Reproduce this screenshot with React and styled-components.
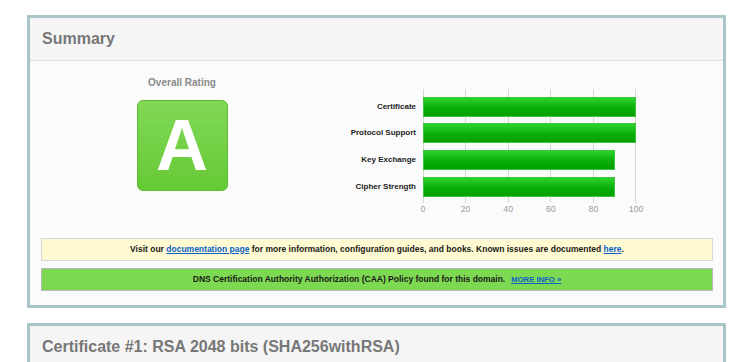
import React from 'react';
import styled, { createGlobalStyle } from 'styled-components';

const GlobalStyle = createGlobalStyle`
  body {
    margin: 0;
    background: #fff;
    font-family: "Liberation Sans", Arial, Helvetica, sans-serif;
  }
`;

const Page = styled.div`
  padding: 15px 24px 0 27px;
  height: 362px;
  overflow: hidden;
  box-sizing: border-box;
`;

const Section = styled.div`
  border: 3px solid #a9c5c7;
  background: #fbfbfb;
  margin-bottom: 15px;
`;

const SectionHeader = styled.div`
  background: #f5f5f5;
  border-bottom: 1px solid #d6e0e0;
  padding: 12px 12px;
  font-size: 16px;
  line-height: 18px;
  font-weight: bold;
  color: #777;
`;

const SectionBody = styled.div`
  padding: 0 10px 14px 11px;
  min-height: ${(props) => props.minHeight || 0}px;
`;

const SummaryRow = styled.div`
  display: flex;
  align-items: flex-start;
`;

const RatingCol = styled.div`
  width: 282px;
  display: flex;
  flex-direction: column;
  align-items: center;
  padding-top: 16px;
`;

const RatingTitle = styled.div`
  font-size: 10px;
  line-height: 12px;
  font-weight: bold;
  color: #8a8a8a;
  margin-bottom: 11px;
`;

const Grade = styled.div`
  width: 91px;
  height: 91px;
  box-sizing: border-box;
  border: 1px solid #5dbb33;
  border-radius: 6px;
  background: linear-gradient(#80d856, #67c936);
  color: #fff;
  font-size: 72px;
  line-height: 89px;
  font-weight: bold;
  text-align: center;
`;

const Chart = styled.div`
  margin-top: 28px;
  display: grid;
  grid-template-columns: 100px 213px;
`;

const Labels = styled.div`
  display: flex;
  flex-direction: column;
  gap: 6.7px;
  padding: 7.7px 7px 6px 0;
`;

const Label = styled.div`
  height: 20px;
  line-height: 20px;
  font-size: 8px;
  font-weight: bold;
  color: #222;
  text-align: right;
  white-space: nowrap;
`;

const Plot = styled.div`
  display: flex;
  flex-direction: column;
  gap: 6.7px;
  padding: 7.7px 0 6px 0;
  background-image: linear-gradient(#d6d6d6, #d6d6d6), linear-gradient(#d6d6d6, #d6d6d6),
    linear-gradient(#d6d6d6, #d6d6d6), linear-gradient(#d6d6d6, #d6d6d6),
    linear-gradient(#d6d6d6, #d6d6d6), linear-gradient(#d6d6d6, #d6d6d6);
  background-size: 1px 100%;
  background-repeat: no-repeat;
  background-position: 0 0, 20% 0, 40% 0, 60% 0, 80% 0, 100% 0;
`;

const Bar = styled.div`
  height: 20px;
  box-sizing: border-box;
  border: 1px solid #3cc43c;
  background: linear-gradient(#2dd22d, #0aae0a 55%, #02a002);
`;

const Axis = styled.div`
  grid-column: 2;
  display: flex;
  justify-content: space-between;
  width: 213px;
  margin-top: 1px;
`;

const Tick = styled.span`
  width: 0;
  display: flex;
  justify-content: center;
  font-size: 8.7px;
  line-height: 10px;
  color: #9a9a9a;
`;

const Notice = styled.div`
  margin-top: ${(props) => props.gap}px;
  border: 1px solid ${(props) => (props.kind === 'ok' ? '#b8b8b8' : '#d8d8d8')};
  background: ${(props) => (props.kind === 'ok' ? '#7ed952' : '#fffad2')};
  padding: 5px 8px;
  font-size: 8.5px;
  line-height: 11px;
  font-weight: bold;
  color: #1a1a1a;
  text-align: center;
`;

const Link = styled.a`
  color: #0b5fc9;
  text-decoration: underline;
`;

const MoreInfo = styled(Link)`
  font-size: 7.7px;
  margin-left: 6px;
`;

const scores = [
  { name: 'Certificate', value: 100 },
  { name: 'Protocol Support', value: 100 },
  { name: 'Key Exchange', value: 90 },
  { name: 'Cipher Strength', value: 90 },
];

export default function App() {
  return (
    <Page>
      <GlobalStyle />
      <Section>
        <SectionHeader>Summary</SectionHeader>
        <SectionBody>
          <SummaryRow>
            <RatingCol>
              <RatingTitle>Overall Rating</RatingTitle>
              <Grade>A</Grade>
            </RatingCol>
            <Chart>
              <Labels>
                {scores.map((s) => (
                  <Label key={s.name}>{s.name}</Label>
                ))}
              </Labels>
              <Plot>
                {scores.map((s) => (
                  <Bar key={s.name} style={{ width: `${s.value * 2.12 + 1}px` }} />
                ))}
              </Plot>
              <Axis>
                {[0, 20, 40, 60, 80, 100].map((t) => (
                  <Tick key={t}>{t}</Tick>
                ))}
              </Axis>
            </Chart>
          </SummaryRow>
          <Notice gap={24}>
            Visit our <Link href="#">documentation page</Link> for more information, configuration
            guides, and books. Known issues are documented <Link href="#">here</Link>.
          </Notice>
          <Notice gap={7} kind="ok">
            DNS Certification Authority Authorization (CAA) Policy found for this domain.
            <MoreInfo href="#">MORE INFO »</MoreInfo>
          </Notice>
        </SectionBody>
      </Section>
      <Section>
        <SectionHeader>Certificate #1: RSA 2048 bits (SHA256withRSA)</SectionHeader>
        <SectionBody minHeight={120} />
      </Section>
    </Page>
  );
}
